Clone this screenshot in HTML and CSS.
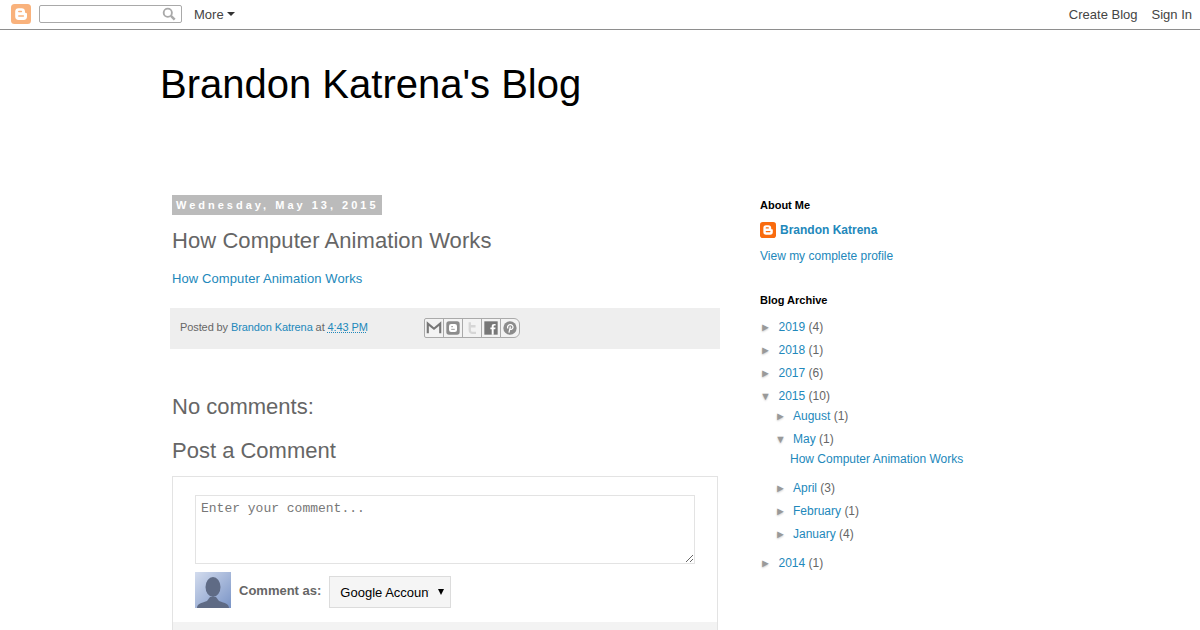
FILE: index.html
```html
<!DOCTYPE html>
<html lang="en">
<head>
<meta charset="utf-8">
<title>Brandon Katrena's Blog</title>
<link rel="stylesheet" href="styles.css">
</head>
<body>
<nav class="navbar">
  <svg class="nav-logo" width="20" height="20" viewBox="0 0 20 20"><rect width="20" height="20" rx="3.5" fill="#f9b27c"/><path d="M7.6 4.2h3a3.4 3.4 0 0 1 3.4 3.2v.9c0 .5.4.8.8.8h.4c.5 0 .8.3.8.8v2.7a3.4 3.4 0 0 1-3.4 3.4H7.6a3.4 3.4 0 0 1-3.4-3.4V7.6a3.4 3.4 0 0 1 3.4-3.4z" fill="#fff"/><path d="M7.8 7.4h2.6M7.8 12h4.6" stroke="#f9b27c" stroke-width="1.5" stroke-linecap="round"/></svg>
  <div class="nav-search">
    <svg width="14" height="14" viewBox="0 0 15 15"><circle cx="6.2" cy="6.2" r="4.4" fill="none" stroke="#a9a9a9" stroke-width="2"/><path d="M9.6 9.6l4 4" stroke="#a9a9a9" stroke-width="2.6"/></svg>
  </div>
  <a class="nav-link nav-more">More</a><span class="nav-caret"></span>
  <span class="nav-spacer"></span>
  <a class="nav-link">Create Blog</a>
  <a class="nav-link">Sign In</a>
</nav>

<header class="blog-header"><h1>Brandon Katrena's Blog</h1></header>

<div class="content">
  <main class="main">
    <h2 class="date-header"><span>Wednesday, May 13, 2015</span></h2>
    <h3 class="post-title">How Computer Animation Works</h3>
    <div class="post-body"><a href="#">How Computer Animation Works</a></div>
    <div class="post-footer">
      <span class="byline">Posted by <a href="#">Brandon Katrena</a> at <a href="#" class="timestamp">4:43 PM</a></span>
      <div class="share">
        <a class="share-btn"><svg viewBox="0 0 18 18"><path d="M2 15V4l7 5.800L16 4v11" fill="none" stroke="#777" stroke-width="2.400"/></svg></a>
        <a class="share-btn"><svg viewBox="0 0 18 18"><rect x="1.500" y="1.500" width="15" height="15" rx="3" fill="#8c8c8c"/><rect x="4.500" y="4.500" width="9" height="9" rx="2.500" fill="#fff"/><path d="M7 7.500h2M7 10.500h4" stroke="#8c8c8c" stroke-width="1"/></svg></a>
        <a class="share-btn"><svg viewBox="0 0 18 18"><path d="M6.500 2.500v9a3 3 0 0 0 3 3h4M6.500 7h6.500" fill="none" stroke="#d6d6d6" stroke-width="2.600"/></svg></a>
        <a class="share-btn"><svg viewBox="0 0 18 18"><rect x="1.500" y="1.500" width="15" height="15" fill="#777"/><path d="M12 16.500v-6h1.800l.3-2H12V7.200c0-.7.300-1 1-1h1.200V4.400h-1.700c-1.800 0-2.700 1-2.700 2.600v1.500H8.300v2h1.500v6z" fill="#fff"/></svg></a>
        <a class="share-btn"><svg viewBox="0 0 18 18"><circle cx="9" cy="9" r="7.500" fill="#8c8c8c"/><path d="M6.700 9.500C5.600 7.500 7 5.300 9.300 5.300c2.200 0 3.300 1.500 3 3.300-.3 1.700-2.300 2.800-3.400 1.400M9.500 7.300L7.800 14.200" fill="none" stroke="#fff" stroke-width="1.400"/></svg></a>
      </div>
    </div>
    <h4 class="comments-title">No comments:</h4>
    <h4 class="comment-form-title">Post a Comment</h4>
    <section class="comment-box">
      <textarea class="comment-input" placeholder="Enter your comment..."></textarea>
      <div class="comment-as">
        <svg class="avatar" width="36" height="36" viewBox="0 0 36 36"><defs><linearGradient id="av" x1="0" y1="0" x2="1" y2="1"><stop offset="0" stop-color="#d3dcee"/><stop offset="1" stop-color="#7a94c6"/></linearGradient></defs><rect width="36" height="36" fill="url(#av)"/><ellipse cx="18" cy="15" rx="7.500" ry="10" fill="#5f6b85"/><path d="M2 36c0-4 4-5 10-7l3-4h6l3 4c6 2 10 3 10 7z" fill="#5f6b85"/></svg>
        <span class="comment-label">Comment as:</span>
        <div class="select-wrap"><select class="comment-select"><option>Google Account</option></select></div>
      </div>
      <div class="comment-strip"></div>
    </section>
  </main>

  <aside class="sidebar">
    <section class="widget about">
      <h2 class="widget-title">About Me</h2>
      <a class="profile-name" href="#"><svg width="16" height="16" viewBox="0 0 20 20"><rect width="20" height="20" rx="3.500" fill="#f96b0e"/><path d="M7.600 4.200h3a3.400 3.400 0 0 1 3.400 3.200v.9c0 .5.400.8.800.8h.4c.5 0 .8.300.8.800v2.700a3.400 3.400 0 0 1-3.400 3.400H7.600a3.400 3.400 0 0 1-3.400-3.400V7.600a3.400 3.400 0 0 1 3.400-3.400z" fill="#fff"/><path d="M7.800 7.400h2.600M7.800 12h4.600" stroke="#f96b0e" stroke-width="1.500" stroke-linecap="round"/></svg>Brandon Katrena</a>
      <a class="profile-link" href="#">View my complete profile</a>
    </section>
    <section class="widget archive">
      <h2 class="widget-title">Blog Archive</h2>
      <ul class="tree">
        <li class="row"><span class="arrow">►</span><a href="#">2019</a> <span class="count">(4)</span></li>
        <li class="row"><span class="arrow">►</span><a href="#">2018</a> <span class="count">(1)</span></li>
        <li class="row"><span class="arrow">►</span><a href="#">2017</a> <span class="count">(6)</span></li>
        <li class="row"><span class="arrow">▼</span><a href="#">2015</a> <span class="count">(10)</span>
          <ul class="tree sub">
            <li class="row"><span class="arrow">►</span><a href="#">August</a> <span class="count">(1)</span></li>
            <li class="row"><span class="arrow">▼</span><a href="#">May</a> <span class="count">(1)</span>
              <ul class="posts"><li><a href="#">How Computer Animation Works</a></li></ul>
            </li>
            <li class="row"><span class="arrow">►</span><a href="#">April</a> <span class="count">(3)</span></li>
            <li class="row"><span class="arrow">►</span><a href="#">February</a> <span class="count">(1)</span></li>
            <li class="row"><span class="arrow">►</span><a href="#">January</a> <span class="count">(4)</span></li>
          </ul>
        </li>
        <li class="row"><span class="arrow">►</span><a href="#">2014</a> <span class="count">(1)</span></li>
      </ul>
    </section>
  </aside>
</div>
</body>
</html>
```
FILE: styles.css
```css
html, body { margin: 0; height: 630px; overflow: hidden; background: #fff; }
body { font-family: "Liberation Sans", Arial, sans-serif; font-size: 12px; color: #666; }
a { color: #2288bb; text-decoration: none; }
ul { list-style: none; margin: 0; padding: 0; }
h1, h2, h3, h4 { margin: 0; }

.navbar { display: flex; align-items: center; height: 28px; border-bottom: 1px solid #8e8e8e; padding: 0 8px 1px 11px; font-size: 13px; }
.nav-logo { flex: none; }
.nav-search { display: flex; align-items: center; justify-content: flex-end; box-sizing: border-box; width: 143px; height: 18px; margin-left: 8px; padding-right: 5px; border: 1px solid #a9a9a9; border-radius: 2px; }
.nav-link { color: #444; margin-left: 14px; }
.nav-more { margin-left: 12px; }
.nav-caret { width: 0; height: 0; margin-left: 3px; border: 4px solid transparent; border-top-color: #333; border-bottom: 0; }
.nav-spacer { flex: 1; }

.blog-header { padding: 31px 0 0 160px; height: 132px; box-sizing: border-box; }
.blog-header h1 { font-size: 40px; font-weight: 400; line-height: 46px; color: #000; }

.content { display: flex; padding: 33px 0 0 172px; }
.main { width: 546px; flex: none; }
.sidebar { margin-left: 42px; width: 230px; padding-top: 3px; }

.date-header { font-size: 11px; line-height: 20px; height: 20px; }
.date-header span { display: inline-block; background: #bbb; color: #fff; font-size: 11px; font-weight: 700; letter-spacing: 3px; line-height: 20px; padding: 0 3px 0 4px; }
.post-title { margin-top: 13px; font-size: 22px; font-weight: 400; line-height: 26px; letter-spacing: .07px; color: #666; }
.post-body { margin-top: 16px; font-size: 13px; line-height: 18px; letter-spacing: .1px; }

.post-footer { display: flex; align-items: center; box-sizing: border-box; width: 550px; height: 41px; margin: 20px 0 0 -2px; padding: 0 10px 1px; background: #eee; font-size: 11px; line-height: 16px; }
.byline { margin-bottom: 2px; letter-spacing: -.1px; }
.timestamp { text-decoration: underline dotted; }
.share { display: flex; margin-left: 56px; }
.share-btn { display: flex; align-items: center; justify-content: center; width: 20px; height: 20px; box-sizing: border-box; border: 1px solid #aaa; margin-left: -1px; background: #f3f3f3; }
.share-btn:first-child { border-radius: 2px 0 0 2px; margin-left: 0; }
.share-btn:last-child { border-radius: 0 6px 6px 0; }
.share-btn svg { width: 16px; height: 16px; }

.comments-title { margin-top: 45px; font-size: 22px; font-weight: 400; line-height: 26px; }
.comment-form-title { margin-top: 18px; font-size: 22px; font-weight: 400; line-height: 26px; }

.comment-box { box-sizing: border-box; width: 546px; height: 180px; margin-top: 12px; padding: 18px 22px 0; border: 1px solid #e3e3e3; border-bottom: 0; position: relative; }
.comment-input { display: block; box-sizing: border-box; width: 500px; height: 69px; margin: 0; padding: 5px; border: 1px solid #e3e3e3; outline: 0; font-family: "Liberation Mono", monospace; font-size: 13px; line-height: 15px; }
.comment-input::placeholder { color: #777; }
.comment-as { display: flex; align-items: flex-start; margin-top: 8px; }
.avatar { flex: none; }
.comment-label { margin: 11px 0 0 8px; font-size: 13px; font-weight: 700; line-height: 16px; color: #666; }
.select-wrap { position: relative; margin: 4px 0 0 8px; }
.select-wrap::after { content: ""; position: absolute; left: 109px; top: 13px; width: 0; height: 0; border: 3px solid transparent; border-top: 6px solid #000; border-bottom: 0; }
.comment-select { display: block; appearance: none; box-sizing: border-box; width: 122px; height: 32px; margin: 0; padding: 0 21px 0 10px; border: 1px solid #dcdcdc; border-radius: 0; background: #f5f5f5; color: #000; font-family: "Liberation Sans", Arial, sans-serif; font-size: 13px; }
.comment-strip { position: absolute; left: 0; right: 0; top: 145px; height: 34px; background: #f3f3f3; }

.widget-title { font-size: 11px; font-weight: 700; line-height: 14px; color: #000; }
.profile-name { display: flex; align-items: center; gap: 4px; margin-top: 10px; font-size: 12px; font-weight: 700; line-height: 16px; }
.profile-link { display: block; margin-top: 10px; line-height: 16px; }
.archive { margin-top: 29px; }
.tree { margin-top: 13px; line-height: 14px; }
.tree .row { padding-top: 9px; }
.tree > .row:first-child { padding-top: 0; }
.arrow { display: inline-block; vertical-align: top; width: 14px; height: 14px; margin: 0 4.5px 0 0; color: #999; font-size: 11px; line-height: 14px; text-shadow: 0 1px 2px #ccc; }
.tree.sub { margin: 6px 0 6px 15px; }
.tree.sub .arrow { margin-right: 4px; }
.posts { margin: 6px 0 6px 15px; }
```
